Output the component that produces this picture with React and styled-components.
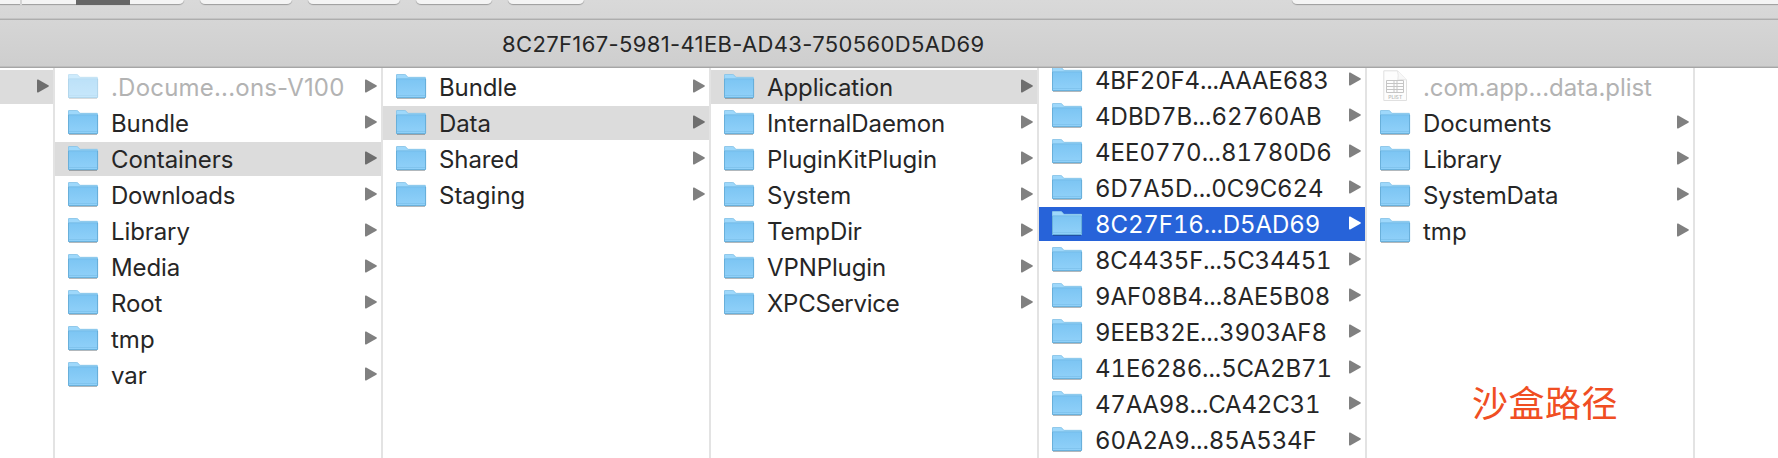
import React from "react";
import styled, { createGlobalStyle } from "styled-components";

const Global = createGlobalStyle`
  * { box-sizing: border-box; }
  body { margin: 0; background: #fff; font-family: Inter, "Liberation Sans", sans-serif; color: #262626; }
`;

const Window = styled.div`
  width: 1778px;
  height: 458px;
  overflow: hidden;
  display: flex;
  flex-direction: column;
  background: #fff;
`;

const Chrome = styled.div`
  flex: none;
  height: 68px;
  display: flex;
  flex-direction: column;
  background: linear-gradient(#d9d9d9, #cecece);
  border-bottom: 1px solid #a6a6a6;
  box-shadow: inset 0 -1px #bdbdbd;
`;

const Toolbar = styled.div`
  flex: none;
  height: 20px;
  display: flex;
  align-items: flex-start;
  border-bottom: 1px solid #adadad;
  box-shadow: inset 0 -1px #c4c4c4;
`;

const ToolButton = styled.div`
  flex: none;
  display: flex;
  width: ${(p) => p.$width}px;
  height: 5px;
  margin-right: ${(p) => p.$gap}px;
  background: #f4f4f4;
  border-bottom: 1px solid #a2a2a2;
  border-radius: ${(p) => (p.$open ? "0 0 0 8px" : p.$joined ? "0 0 8px 0" : "0 0 8px 8px")};
  box-shadow: 0 0 1px #9a9a9a;
`;

const Segment = styled.div`
  width: ${(p) => p.$width}px;
  height: 5px;
  background: ${(p) => (p.$active ? "#666" : "transparent")};
  border-right: ${(p) => (p.$divider ? "2px solid #d5d5d5" : "none")};
`;

const TitleBar = styled.div`
  flex: 1;
  display: flex;
  align-items: center;
  padding-left: 502px;
`;

const Title = styled.span`
  font-size: 22px;
  line-height: 26px;
  letter-spacing: 0.36px;
  white-space: nowrap;
`;

const Browser = styled.div`
  flex: 1;
  min-height: 0;
  display: flex;
`;

const Column = styled.div`
  flex: none;
  width: ${(p) => p.$width}px;
  padding-top: 2px;
  border-right: 2px solid #e3e3e3;
  overflow: hidden;
`;

const List = styled.div`
  display: flex;
  flex-direction: column;
  gap: 2px;
  margin-top: ${(p) => p.$scroll || 0}px;
`;

const Row = styled.div`
  flex: none;
  display: flex;
  align-items: center;
  height: 34px;
  padding: 0 4px 0 13px;
  background: ${(p) => (p.$state === "active" ? "#2763d9" : p.$state === "path" ? "#dcdcdc" : "transparent")};
  color: ${(p) => (p.$state === "active" ? "#fff" : p.$dim ? "#b3b3b3" : "#262626")};
`;

const IconSlot = styled.div`
  flex: none;
  display: flex;
  width: 43px;
  height: 34px;
  opacity: ${(p) => (p.$dim ? 0.5 : 1)};
`;

const Label = styled.span`
  flex: 1;
  padding-top: 2px;
  font-size: 24px;
  line-height: 32px;
  font-variant-numeric: ${(p) => (p.$dim ? "normal" : "tabular-nums")};
  letter-spacing: ${(p) => p.$spacing ?? -0.1}px;
  white-space: nowrap;
`;

const Arrow = styled.svg`
  flex: none;
  display: block;
  margin-left: auto;
  fill: ${(p) => (p.$state === "active" ? "#fff" : p.$state === "path" ? "#6e6e6e" : "#808080")};
`;

const Note = styled.div`
  padding: 127px 0 0 105px;
  font-family: "Noto Sans CJK SC", sans-serif;
  font-size: 36px;
  line-height: 52px;
  letter-spacing: 0.5px;
  color: #f04e23;
  white-space: nowrap;
`;

function Folder() {
  return (
    <svg width="32" height="34" viewBox="0 0 32 34">
      <defs>
        <linearGradient id="folderFront" x1="0" y1="0" x2="0" y2="1">
          <stop offset="0" stopColor="#7cc5f3" />
          <stop offset="1" stopColor="#91d1f9" />
        </linearGradient>
      </defs>
      <path d="M1 28.4H29" stroke="#000" strokeOpacity=".3" />
      <path d="M0 5.2Q0 4.2 1 4.2H8.6Q9.5 4.2 10.2 5L11.3 6.4Q11.8 7 12.6 7H29Q30 7 30 8V27Q30 28 29 28H1Q0 28 0 27Z" fill="#9ed8fb" />
      <path d="M0 9H30V27Q30 28 29 28H1Q0 28 0 27Z" fill="url(#folderFront)" />
      <path d="M0 8.8H30" stroke="#6fb5e2" strokeWidth=".8" />
      <path d="M.4 9V27Q.4 27.6 1 27.6H29Q29.6 27.6 29.6 27V9" fill="none" stroke="#62a9d4" strokeWidth=".9" />
      <path d="M.4 9V5.2Q.4 4.5 1 4.5H8.6Q9.5 4.5 10.2 5.3L11.3 6.7Q11.8 7.3 12.6 7.3H29.4" fill="none" stroke="#82bfe2" strokeWidth=".7" />
      <path d="M1 25.5H29" stroke="#77bce8" strokeWidth=".6" />
    </svg>
  );
}

function Plist() {
  return (
    <svg width="32" height="34" viewBox="0 0 32 34">
      <path d="M3.8 .8H17.5L26.5 10V30.5H3.8Z" fill="#fdfdfd" stroke="#c2c2c2" strokeWidth="1" />
      <path d="M17.5 .8Q18.8 6 17.8 10Q22 8.8 26.5 10" fill="#f3f3f3" stroke="#c6c6c6" strokeWidth=".8" />
      <path d="M6.5 10.5H23.5V22.5H6.5ZM6.5 13.5H23.5M6.5 16.5H23.5M6.5 19.5H23.5M14 10.5V22.5M17 10.5V22.5" fill="none" stroke="#8c8c8c" strokeWidth="1" />
      <text x="15.2" y="28.8" fontSize="5" fontWeight="600" textAnchor="middle" fill="#777">PLIST</text>
    </svg>
  );
}

function Disclosure({ state }) {
  return (
    <Arrow $state={state} width="12" height="34" viewBox="0 0 12 34">
      <path d="M0 10.2Q0 9 1.2 9.6L11.3 15.3Q12.5 16 11.3 16.7L1.2 22.4Q0 23 0 21.8Z" />
    </Arrow>
  );
}

const columns = [
  {
    items: [
      { name: ".Docume...ons-V100", dim: true, spacing: 0.2 },
      { name: "Bundle" },
      { name: "Containers", state: "path" },
      { name: "Downloads", spacing: -0.25 },
      { name: "Library" },
      { name: "Media" },
      { name: "Root" },
      { name: "tmp", spacing: 0 },
      { name: "var", spacing: 0 },
    ],
  },
  { items: [{ name: "Bundle" }, { name: "Data", state: "path" }, { name: "Shared" }, { name: "Staging", spacing: 0 }] },
  {
    items: [
      { name: "Application", state: "path" },
      { name: "InternalDaemon" },
      { name: "PluginKitPlugin", spacing: 0 },
      { name: "System", spacing: 0 },
      { name: "TempDir" },
      { name: "VPNPlugin" },
      { name: "XPCService", spacing: -0.25 },
    ],
  },
  {
    scroll: -7,
    items: [
      { name: "4BF20F4...AAAE683", spacing: -0.2 },
      { name: "4DBD7B...62760AB", spacing: 0 },
      { name: "4EE0770...81780D6", spacing: 0 },
      { name: "6D7A5D...0C9C624" },
      { name: "8C27F16...D5AD69", state: "active" },
      { name: "8C4435F...5C34451", spacing: -0.2 },
      { name: "9AF08B4...8AE5B08" },
      { name: "9EEB32E...3903AF8" },
      { name: "41E6286...5CA2B71" },
      { name: "47AA98...CA42C31", spacing: -0.2 },
      { name: "60A2A9...85A534F" },
    ],
  },
  {
    note: "沙盒路径",
    items: [
      { name: ".com.app...data.plist", dim: true, file: true, spacing: -0.05 },
      { name: "Documents", spacing: -0.05 },
      { name: "Library" },
      { name: "SystemData" },
      { name: "tmp", spacing: 0 },
    ],
  },
];

function Entry({ item }) {
  return (
    <Row $state={item.state} $dim={item.dim}>
      <IconSlot $dim={item.dim}>{item.file ? <Plist /> : <Folder />}</IconSlot>
      <Label $dim={item.dim} $spacing={item.spacing}>{item.name}</Label>
      {!item.file && <Disclosure state={item.state} />}
    </Row>
  );
}

export default function App() {
  return (
    <>
      <Global />
      <Window>
        <Chrome>
          <Toolbar>
            <ToolButton $width={184} $gap={16} $joined>
              <Segment $width={22} $divider />
              <Segment $width={54} />
              <Segment $width={54} $active />
            </ToolButton>
            <ToolButton $width={92} $gap={16} />
            <ToolButton $width={92} $gap={16} />
            <ToolButton $width={76} $gap={16} />
            <ToolButton $width={76} $gap={708} />
            <ToolButton $width={486} $gap={0} $open />
          </Toolbar>
          <TitleBar>
            <Title>8C27F167-5981-41EB-AD43-750560D5AD69</Title>
          </TitleBar>
        </Chrome>
        <Browser>
          <Column $width={55}>
            <Row $state="path">
              <Disclosure state="path" />
            </Row>
          </Column>
          {columns.map((col, i) => (
            <Column key={i} $width={328}>
              <List $scroll={col.scroll}>
                {col.items.map((item) => (
                  <Entry key={item.name} item={item} />
                ))}
              </List>
              {col.note && <Note>{col.note}</Note>}
            </Column>
          ))}
        </Browser>
      </Window>
    </>
  );
}
